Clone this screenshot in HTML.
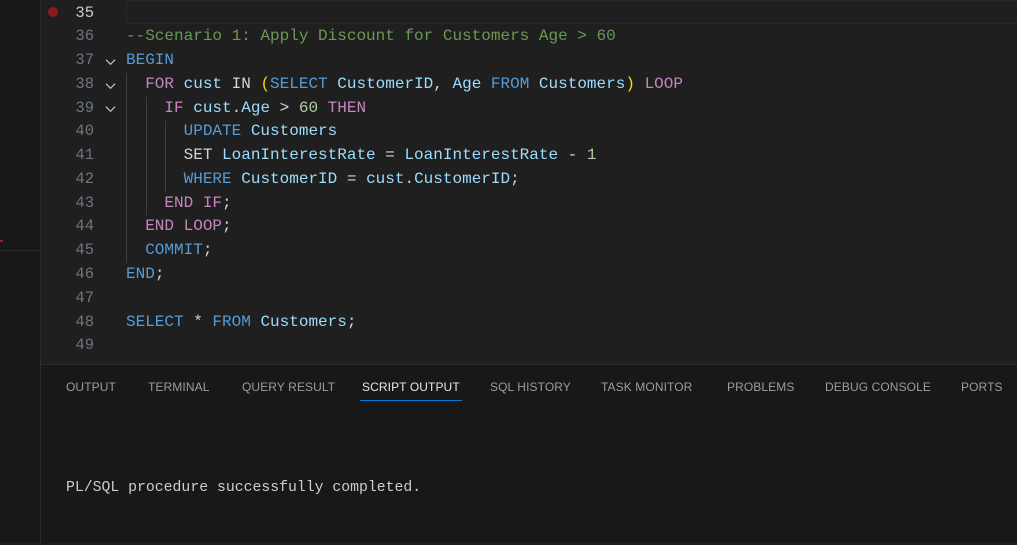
<!DOCTYPE html><html><head><style>
body{margin:0;width:1017px;height:543px;background:#1f1f1f;overflow:hidden;position:relative;font-family:"Liberation Mono",monospace}
.side{position:absolute;left:0;top:0;width:40px;height:543px;background:#181818;border-right:1px solid #2b2b2b}
.ln{position:absolute;left:60px;width:34px;text-align:right;color:#6e7681;font-size:15.5px;line-height:23.77px}
.c{position:absolute;left:126px;font-size:16px;line-height:23.77px;white-space:pre;color:#d4d4d4}
.k{color:#569cd6}.p{color:#c586c0}.i{color:#9cdcfe}.n{color:#b5cea8}.cm{color:#6a9955}.b{color:#ffd700}
.g{position:absolute;width:1px;background:#404040}
.chev{position:absolute;left:105px;width:11px;height:11px}
.panel{position:absolute;left:41px;top:364px;right:0;bottom:0;background:#181818;border-top:1px solid #2b2b2b}
.tab{position:absolute;top:15px;font-family:"Liberation Sans",sans-serif;font-size:12px;color:#9d9d9d;letter-spacing:0.1px}
.w{position:absolute;left:0;top:1.5px;width:100%;height:543px}
</style></head><body>
<div class="side"></div>
<div style="position:absolute;left:0;top:250px;width:40px;height:1px;background:#2b2b2b"></div>
<div style="position:absolute;left:0;top:240px;width:3px;height:2px;background:#a02020"></div>
<div style="position:absolute;left:126px;top:0;right:0;height:22px;border:1px solid #282828;border-right:none"></div>
<div style="position:absolute;left:48px;top:7px;width:10px;height:10px;border-radius:50%;background:#8a1c1c"></div>
<div class="w">
<div class="g" style="left:126px;top:71px;height:190px"></div>
<div class="g" style="left:146px;top:95px;height:118px"></div>
<div class="g" style="left:165px;top:119px;height:71px"></div>
<div class="ln" style="top:0;color:#ccc">35</div>
<div class="ln" style="top:23.77px">36</div><div class="ln" style="top:47.54px">37</div><div class="ln" style="top:71.31px">38</div><div class="ln" style="top:95.08px">39</div><div class="ln" style="top:118.85px">40</div><div class="ln" style="top:142.62px">41</div><div class="ln" style="top:166.39px">42</div><div class="ln" style="top:190.16px">43</div><div class="ln" style="top:213.93px">44</div><div class="ln" style="top:237.7px">45</div><div class="ln" style="top:261.47px">46</div><div class="ln" style="top:285.24px">47</div><div class="ln" style="top:309px">48</div><div class="ln" style="top:332.8px">49</div>
<svg class="chev" style="top:54px" viewBox="0 0 12 12"><path d="M1 4l5 5 5-5" stroke="#c5c5c5" stroke-width="1.3" fill="none"/></svg>
<svg class="chev" style="top:78px" viewBox="0 0 12 12"><path d="M1 4l5 5 5-5" stroke="#c5c5c5" stroke-width="1.3" fill="none"/></svg>
<svg class="chev" style="top:101px" viewBox="0 0 12 12"><path d="M1 4l5 5 5-5" stroke="#c5c5c5" stroke-width="1.3" fill="none"/></svg>
<div class="c" style="top:23.77px"><span class="cm">--Scenario 1: Apply Discount for Customers Age &gt; 60</span></div>
<div class="c" style="top:47.54px"><span class="k">BEGIN</span></div>
<div class="c" style="top:71.31px">  <span class="p">FOR</span> <span class="i">cust</span> IN <span class="b">(</span><span class="k">SELECT</span> <span class="i">CustomerID</span>, <span class="i">Age</span> <span class="k">FROM</span> <span class="i">Customers</span><span class="b">)</span> <span class="p">LOOP</span></div>
<div class="c" style="top:95.08px">    <span class="p">IF</span> <span class="i">cust</span>.<span class="i">Age</span> &gt; <span class="n">60</span> <span class="p">THEN</span></div>
<div class="c" style="top:118.85px">      <span class="k">UPDATE</span> <span class="i">Customers</span></div>
<div class="c" style="top:142.62px">      SET <span class="i">LoanInterestRate</span> = <span class="i">LoanInterestRate</span> - <span class="n">1</span></div>
<div class="c" style="top:166.39px">      <span class="k">WHERE</span> <span class="i">CustomerID</span> = <span class="i">cust</span>.<span class="i">CustomerID</span>;</div>
<div class="c" style="top:190.16px">    <span class="p">END IF</span>;</div>
<div class="c" style="top:213.93px">  <span class="p">END LOOP</span>;</div>
<div class="c" style="top:237.7px">  <span class="k">COMMIT</span>;</div>
<div class="c" style="top:261.47px"><span class="k">END</span>;</div>
<div class="c" style="top:309px"><span class="k">SELECT</span> * <span class="k">FROM</span> <span class="i">Customers</span>;</div>
</div>
<div class="panel">
<div class="tab" style="left:25px">OUTPUT</div>
<div class="tab" style="left:107px">TERMINAL</div>
<div class="tab" style="left:201px">QUERY RESULT</div>
<div class="tab" style="left:321px;color:#e7e7e7">SCRIPT OUTPUT</div>
<div style="position:absolute;left:319px;top:35px;width:102px;height:1px;background:#0078d4"></div>
<div class="tab" style="left:449px">SQL HISTORY</div>
<div class="tab" style="left:560px">TASK MONITOR</div>
<div class="tab" style="left:686px">PROBLEMS</div>
<div class="tab" style="left:784px">DEBUG CONSOLE</div>
<div class="tab" style="left:920px">PORTS</div>
<div style="position:absolute;left:25px;top:115px;font-size:14.8px;color:#cccccc;white-space:pre">PL/SQL procedure successfully completed.</div>
</div>
</body></html>
